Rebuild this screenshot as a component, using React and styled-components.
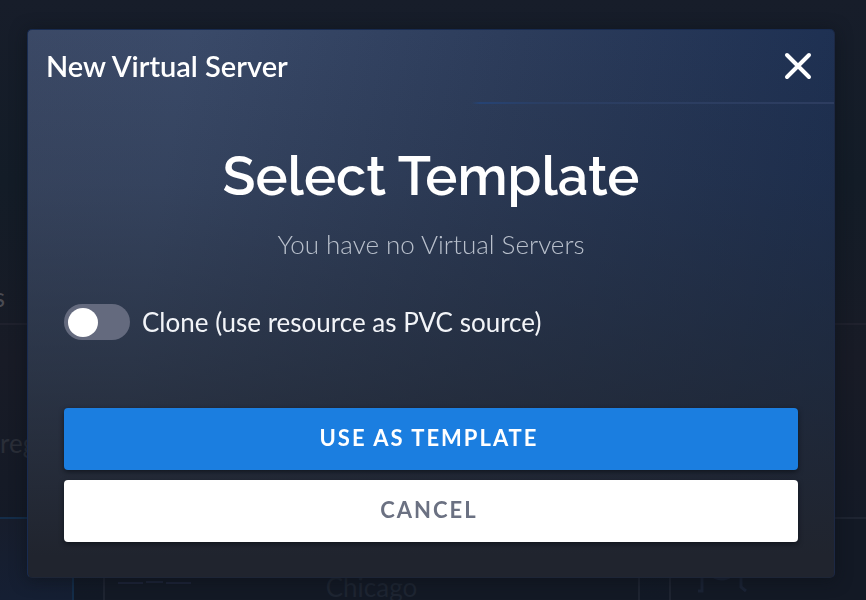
import React, { useState } from "react";
import styled, { createGlobalStyle } from "styled-components";

const GlobalStyle = createGlobalStyle`
  * { box-sizing: border-box; }
  html, body { margin: 0; background: #151b28; }
  body { font-family: Lato, sans-serif; color: #fff; }
  h1, h2, p { margin: 0; }
`;

const Page = styled.main`
  display: grid;
  grid-template-rows: 325px 192px 1fr;
  height: 100vh;
  overflow: hidden;
  background: linear-gradient(#171d2a, #131c27 30%, #181b26 60%, #121926);
`;

const PageSection = styled.div`
  display: flex;
  align-items: flex-end;
  padding-bottom: ${(p) => p.$space}px;
  border-bottom: ${(p) => (p.$ruled ? "2px solid #1f212d" : "0")};
  font-size: 26px;
  line-height: 32px;
  color: ${(p) => p.$color};
`;

const ScrolledLabel = styled.span`
  display: flex;
  justify-content: flex-end;
  width: 5px;
`;

const CardRow = styled.section`
  display: grid;
  grid-template-columns: 74px minmax(0, 1fr) 197px;
  column-gap: 29px;
`;

const PlaceCard = styled.article`
  display: grid;
  grid-template-columns: 1fr auto 1fr;
  align-items: start;
  height: 160px;
  padding-top: 52px;
  border: 2px solid ${(p) => (p.$selected ? "#142d49" : "#1e2431")};
  border-left-width: ${(p) => (p.$selected ? 0 : 2)}px;
  border-right-width: ${(p) => (p.$last ? 0 : 2)}px;
  background: ${(p) => (p.$selected ? "linear-gradient(#171d2c, #13213a)" : "#131925")};
  font-size: 26px;
  line-height: 32px;
  color: #1e2532;
`;

const PlaceMark = styled.svg`
  margin-left: ${(p) => p.$inset}px;
`;

const Overlay = styled.div`
  position: fixed;
  inset: 0;
  padding: 29px 31px 22px 27px;
`;

const Dialog = styled.section`
  display: flex;
  flex-direction: column;
  border: 1px solid #182b50;
  border-color: #182b50 #1c2844 #1d2536 #182b50;
  border-radius: 5px;
  background:
    linear-gradient(rgba(32, 37, 47, 0) 0%, rgba(32, 39, 50, 0.2) 28%, rgba(32, 38, 48, 0.6) 62%, #20242e 96%) border-box,
    linear-gradient(100deg, #3b4966 0%, #3a4a69 18%, #2c3c5b 55%, #1a2d50 100%) border-box;
  box-shadow: 0 2px 16px rgba(12, 16, 24, 0.6);
`;

const DialogHeader = styled.header`
  display: flex;
  align-items: center;
  justify-content: space-between;
  height: 74px;
  padding: 0 18px;
  border-bottom: 2px solid;
  border-image: linear-gradient(to right, transparent 55%, #264374 56%, #2b3e62 64%, #2d3d60) 1;
`;

const DialogTitle = styled.h2`
  font-size: 29px;
  font-weight: 600;
  line-height: 34px;
`;

const CloseButton = styled.button`
  display: flex;
  padding: 4px;
  border: 0;
  background: none;
  color: #fff;
  cursor: pointer;
`;

const DialogBody = styled.div`
  display: flex;
  flex-direction: column;
  padding: 40px 36px 35px;
`;

const Heading = styled.h1`
  font-family: Raleway, Lato, sans-serif;
  font-size: 54px;
  font-weight: 600;
  line-height: 64px;
  text-align: center;
`;

const Note = styled.p`
  margin-top: 20px;
  font-size: 26px;
  font-weight: 300;
  line-height: 32px;
  text-align: center;
  color: #b9c0cc;
`;

const SwitchLabel = styled.label`
  display: flex;
  align-items: center;
  gap: 12px;
  margin: 44px 0 68px;
  font-size: 26px;
  line-height: 36px;
  color: #f2f4f8;
  cursor: pointer;
`;

const SwitchInput = styled.input`
  appearance: none;
  display: flex;
  align-items: center;
  width: 66px;
  height: 36px;
  margin: 0;
  padding: 4px;
  border-radius: 18px;
  background: #646a7e;
  cursor: pointer;

  &::before {
    content: "";
    width: 30px;
    height: 29px;
    border-radius: 50%;
    background: #fff;
  }

  &:checked {
    justify-content: flex-end;
    background: #1b7ee0;
  }
`;

const Actions = styled.div`
  display: grid;
  gap: 10px;
`;

const ActionButton = styled.button`
  height: 62px;
  padding: 0 4px 3px 0;
  border: 0;
  border-radius: 4px;
  background: ${(p) => (p.$primary ? "#1b7ee0" : "#fff")};
  color: ${(p) => (p.$primary ? "#fff" : "#6b7182")};
  box-shadow: 0 2px 5px rgba(10, 14, 22, 0.7);
  font-family: inherit;
  font-size: 22px;
  font-weight: 700;
  letter-spacing: 2px;
  text-transform: uppercase;
  cursor: pointer;
`;

export default function App() {
  const [clone, setClone] = useState(false);
  return (
    <>
      <GlobalStyle />
      <Page>
        <PageSection $ruled $space={10} $color="#4a4b53">
          <ScrolledLabel>s</ScrolledLabel>
        </PageSection>
        <PageSection $space={58} $color="#2a2e38">reg</PageSection>
        <CardRow>
          <PlaceCard $selected />
          <PlaceCard>
            <PlaceMark $inset={13} width="74" height="14" viewBox="0 0 74 14" fill="none" stroke="#1d2438" strokeWidth="2" aria-hidden="true">
              <path d="M0 12H25M28 11H45M48 12H73" />
            </PlaceMark>
            Chicago
          </PlaceCard>
          <PlaceCard $last>
            <PlaceMark $inset={24} width="54" height="22" viewBox="0 0 54 22" fill="none" stroke="#1b2335" strokeWidth="3" aria-hidden="true">
              <path d="M7 2V20H3M46 2V16L51 20M14 2Q26 14 40 2" />
            </PlaceMark>
          </PlaceCard>
        </CardRow>
      </Page>
      <Overlay>
        <Dialog role="dialog" aria-modal="true" aria-labelledby="dialog-title">
          <DialogHeader>
            <DialogTitle id="dialog-title">New Virtual Server</DialogTitle>
            <CloseButton type="button" aria-label="Close">
              <svg width="28" height="28" viewBox="0 0 28 28" fill="none" stroke="currentColor" strokeWidth="4" strokeLinecap="round">
                <path d="M3 3 25 25M25 3 3 25" />
              </svg>
            </CloseButton>
          </DialogHeader>
          <DialogBody>
            <Heading>Select Template</Heading>
            <Note>You have no Virtual Servers</Note>
            <SwitchLabel>
              <SwitchInput type="checkbox" role="switch" checked={clone} onChange={(e) => setClone(e.target.checked)} />
              Clone (use resource as PVC source)
            </SwitchLabel>
            <Actions>
              <ActionButton type="button" $primary>Use as template</ActionButton>
              <ActionButton type="button">Cancel</ActionButton>
            </Actions>
          </DialogBody>
        </Dialog>
      </Overlay>
    </>
  );
}
